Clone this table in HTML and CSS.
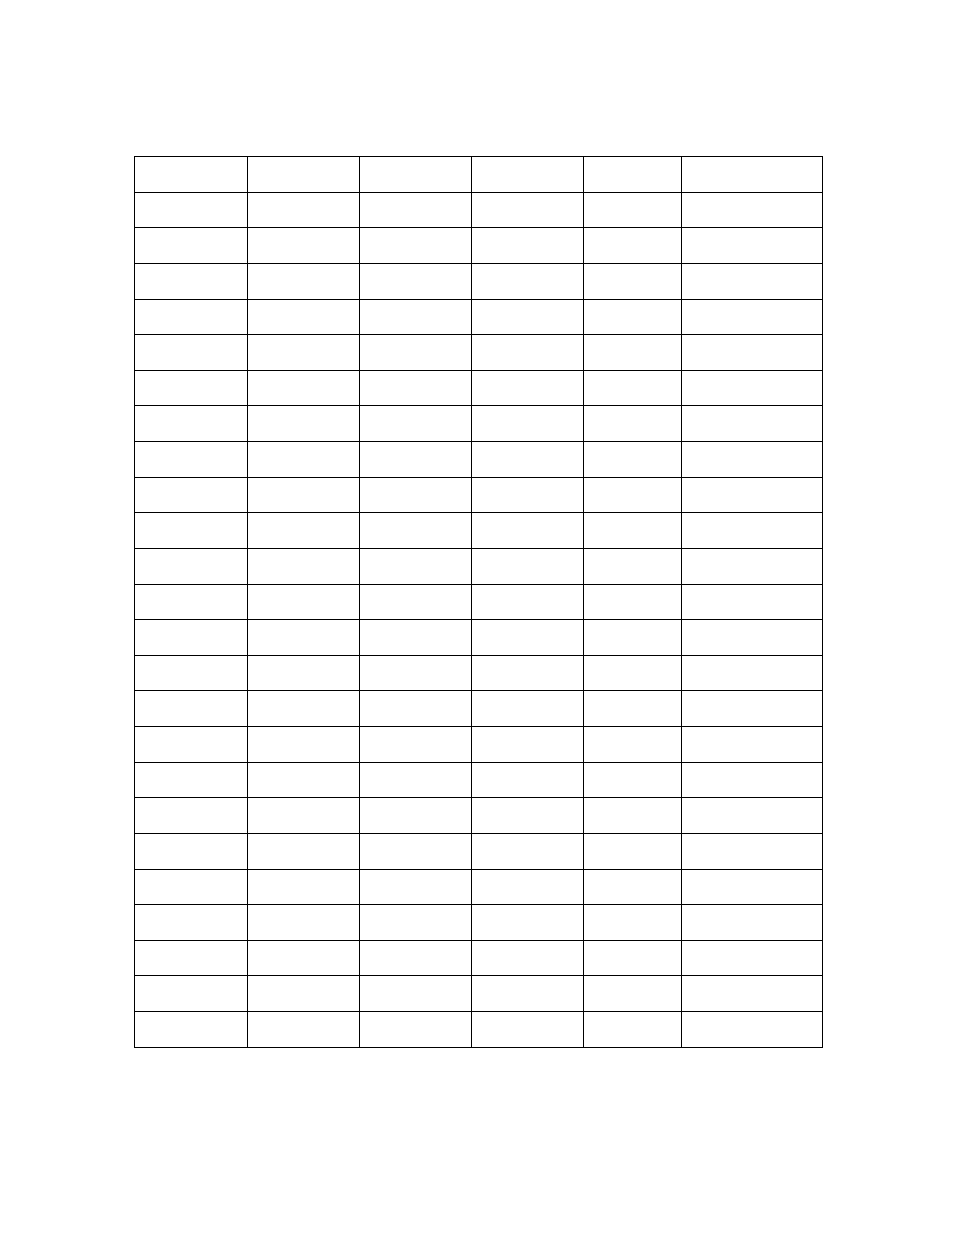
FILE: index.html
```html
<!DOCTYPE html>
<html>
<head>
<meta charset="utf-8">
<link rel="stylesheet" href="styles.css">
</head>
<body>
<div class="page">
<table class="grid">
<colgroup>
<col class="c1"><col class="c2"><col class="c3"><col class="c4"><col class="c5"><col class="c6">
</colgroup>
<tbody>
<tr><td></td><td></td><td></td><td></td><td></td><td></td></tr>
<tr><td></td><td></td><td></td><td></td><td></td><td></td></tr>
<tr><td></td><td></td><td></td><td></td><td></td><td></td></tr>
<tr><td></td><td></td><td></td><td></td><td></td><td></td></tr>
<tr><td></td><td></td><td></td><td></td><td></td><td></td></tr>
<tr><td></td><td></td><td></td><td></td><td></td><td></td></tr>
<tr><td></td><td></td><td></td><td></td><td></td><td></td></tr>
<tr><td></td><td></td><td></td><td></td><td></td><td></td></tr>
<tr><td></td><td></td><td></td><td></td><td></td><td></td></tr>
<tr><td></td><td></td><td></td><td></td><td></td><td></td></tr>
<tr><td></td><td></td><td></td><td></td><td></td><td></td></tr>
<tr><td></td><td></td><td></td><td></td><td></td><td></td></tr>
<tr><td></td><td></td><td></td><td></td><td></td><td></td></tr>
<tr><td></td><td></td><td></td><td></td><td></td><td></td></tr>
<tr><td></td><td></td><td></td><td></td><td></td><td></td></tr>
<tr><td></td><td></td><td></td><td></td><td></td><td></td></tr>
<tr><td></td><td></td><td></td><td></td><td></td><td></td></tr>
<tr><td></td><td></td><td></td><td></td><td></td><td></td></tr>
<tr><td></td><td></td><td></td><td></td><td></td><td></td></tr>
<tr><td></td><td></td><td></td><td></td><td></td><td></td></tr>
<tr><td></td><td></td><td></td><td></td><td></td><td></td></tr>
<tr><td></td><td></td><td></td><td></td><td></td><td></td></tr>
<tr><td></td><td></td><td></td><td></td><td></td><td></td></tr>
<tr><td></td><td></td><td></td><td></td><td></td><td></td></tr>
<tr><td></td><td></td><td></td><td></td><td></td><td></td></tr>
</tbody>
</table>
</div>
</body>
</html>
```
FILE: styles.css
```css
html, body {
  margin: 0;
  padding: 0;
  background: #ffffff;
  font-family: "Liberation Serif", serif;
}
.page {
  padding-top: 156px;
  padding-left: 134px;
}
.grid {
  border-collapse: collapse;
  table-layout: fixed;
  width: 689px;
}
.grid td {
  border: 1px solid #000000;
  padding: 0;
  height: 34.64px;
}
.c1 { width: 113px; }
.c2 { width: 112px; }
.c3 { width: 112px; }
.c4 { width: 112px; }
.c5 { width: 98px; }
.c6 { width: 141px; }
```
